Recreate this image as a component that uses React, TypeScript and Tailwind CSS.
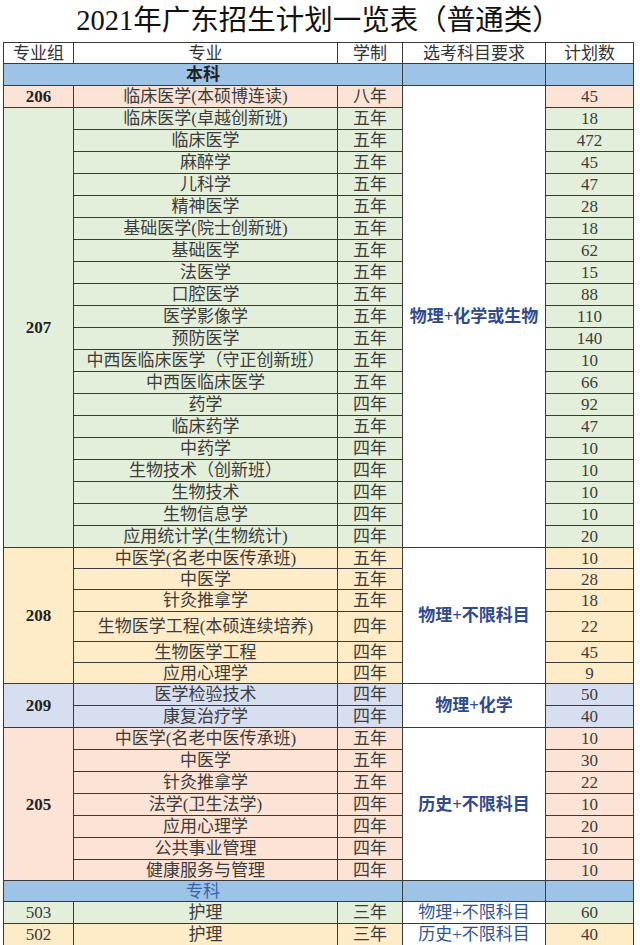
import React from 'react';

type Row = { name: string; years: string; n: string };

const g207: Row[] = [
  { name: '临床医学(卓越创新班)', years: '五年', n: '18' },
  { name: '临床医学', years: '五年', n: '472' },
  { name: '麻醉学', years: '五年', n: '45' },
  { name: '儿科学', years: '五年', n: '47' },
  { name: '精神医学', years: '五年', n: '28' },
  { name: '基础医学(院士创新班)', years: '五年', n: '18' },
  { name: '基础医学', years: '五年', n: '62' },
  { name: '法医学', years: '五年', n: '15' },
  { name: '口腔医学', years: '五年', n: '88' },
  { name: '医学影像学', years: '五年', n: '110' },
  { name: '预防医学', years: '五年', n: '140' },
  { name: '中西医临床医学（守正创新班）', years: '五年', n: '10' },
  { name: '中西医临床医学', years: '五年', n: '66' },
  { name: '药学', years: '四年', n: '92' },
  { name: '临床药学', years: '五年', n: '47' },
  { name: '中药学', years: '四年', n: '10' },
  { name: '生物技术（创新班）', years: '四年', n: '10' },
  { name: '生物技术', years: '四年', n: '10' },
  { name: '生物信息学', years: '四年', n: '10' },
  { name: '应用统计学(生物统计)', years: '四年', n: '20' },
];

const g208: Row[] = [
  { name: '中医学(名老中医传承班)', years: '五年', n: '10' },
  { name: '中医学', years: '五年', n: '28' },
  { name: '针灸推拿学', years: '五年', n: '18' },
  { name: '生物医学工程(本硕连续培养)', years: '四年', n: '22' },
  { name: '生物医学工程', years: '四年', n: '45' },
  { name: '应用心理学', years: '四年', n: '9' },
];

const g209: Row[] = [
  { name: '医学检验技术', years: '四年', n: '50' },
  { name: '康复治疗学', years: '四年', n: '40' },
];

const g205: Row[] = [
  { name: '中医学(名老中医传承班)', years: '五年', n: '10' },
  { name: '中医学', years: '五年', n: '30' },
  { name: '针灸推拿学', years: '五年', n: '22' },
  { name: '法学(卫生法学)', years: '四年', n: '10' },
  { name: '应用心理学', years: '四年', n: '20' },
  { name: '公共事业管理', years: '四年', n: '10' },
  { name: '健康服务与管理', years: '四年', n: '10' },
];

const C = 'flex items-center justify-center whitespace-nowrap pt-px';
const BODY = 'text-[17px] text-[#3c3c3c]';
const PICK = 'text-[17px] font-bold text-[#2f4b8e]';

function Group({
  code,
  rows,
  bg,
  spanCls,
  pick,
  pickSpan,
}: {
  code: string;
  rows: Row[];
  bg: string;
  spanCls: string;
  pick?: string;
  pickSpan?: string;
}) {
  return (
    <>
      {rows.map((r, i) => (
        <React.Fragment key={i}>
          {i === 0 && (
            <div className={`${C} ${bg} ${spanCls} text-[17px] font-bold text-[#222]`}>{code}</div>
          )}
          <div className={`${C} ${bg} ${BODY}`}>{r.name}</div>
          <div className={`${C} ${bg} ${BODY}`}>{r.years}</div>
          {i === 0 && pick !== undefined && (
            <div className={`${C} bg-white ${pickSpan ?? ''} ${PICK}`}>{pick}</div>
          )}
          <div className={`${C} ${bg} ${BODY}`}>{r.n}</div>
        </React.Fragment>
      ))}
    </>
  );
}

export default function App() {
  return (
    <div className="w-[640px] h-[945px] overflow-hidden bg-white font-['Liberation_Serif','Noto_Sans_CJK_SC',serif]">
      <div className="pl-[3px] w-[640px]">
        <div className="h-[42px] w-[631px] flex items-center justify-center text-[28.5px] text-[#111] leading-none">
          2021年广东招生计划一览表（普通类）
        </div>
        <div className="grid w-fit bg-[#3a3a3a] gap-px border border-[#3a3a3a] grid-cols-[69px_263px_64px_142px_87px] grid-rows-[20px_21px_21px_repeat(20,21px)_20px_20px_21px_29px_20px_20px_21px_21px_21px_21px_21px_21px_21px_21px_20px_20px_21px_21px]">
          {/* header */}
          {['专业组', '专业', '学制', '选考科目要求', '计划数'].map((h) => (
            <div key={h} className={`${C} bg-white text-[17px] text-[#333]`}>
              {h}
            </div>
          ))}
          {/* 本科 */}
          <div className={`${C} col-span-3 bg-[#9dc3e6] text-[17px] font-bold text-[#222]`}>本科</div>
          <div className="bg-[#9dc3e6]" />
          <div className="bg-[#9dc3e6]" />
          {/* 206 */}
          <div className={`${C} bg-[#fbe3d5] text-[17px] font-bold text-[#222]`}>206</div>
          <div className={`${C} bg-[#fbe3d5] ${BODY}`}>临床医学(本硕博连读)</div>
          <div className={`${C} bg-[#fbe3d5] ${BODY}`}>八年</div>
          <div className={`${C} bg-white row-span-21 ${PICK}`}>物理+化学或生物</div>
          <div className={`${C} bg-[#fbe3d5] ${BODY}`}>45</div>
          {/* 207 */}
          <Group code="207" rows={g207} bg="bg-[#e3efda]" spanCls="row-span-20" />
          {/* 208 */}
          <Group
            code="208"
            rows={g208}
            bg="bg-[#feebc8]"
            spanCls="row-span-6"
            pick="物理+不限科目"
            pickSpan="row-span-6"
          />
          {/* 209 */}
          <Group
            code="209"
            rows={g209}
            bg="bg-[#d7deef]"
            spanCls="row-span-2"
            pick="物理+化学"
            pickSpan="row-span-2"
          />
          {/* 205 */}
          <Group
            code="205"
            rows={g205}
            bg="bg-[#fbe3d5]"
            spanCls="row-span-7"
            pick="历史+不限科目"
            pickSpan="row-span-7"
          />
          {/* 专科 */}
          <div className={`${C} col-span-3 bg-[#9dc3e6] text-[17px] text-[#3564ad]`}>专科</div>
          <div className="bg-[#9dc3e6]" />
          <div className="bg-[#9dc3e6]" />
          {/* 503 */}
          <div className={`${C} bg-[#e3efda] ${BODY}`}>503</div>
          <div className={`${C} bg-[#e3efda] ${BODY}`}>护理</div>
          <div className={`${C} bg-[#e3efda] ${BODY}`}>三年</div>
          <div className={`${C} bg-white text-[17px] text-[#2f5597]`}>物理+不限科目</div>
          <div className={`${C} bg-[#e3efda] ${BODY}`}>60</div>
          {/* 502 */}
          <div className={`${C} bg-[#feebc8] ${BODY}`}>502</div>
          <div className={`${C} bg-[#feebc8] ${BODY}`}>护理</div>
          <div className={`${C} bg-[#feebc8] ${BODY}`}>三年</div>
          <div className={`${C} bg-white text-[17px] text-[#2f5597]`}>历史+不限科目</div>
          <div className={`${C} bg-[#feebc8] ${BODY}`}>40</div>
        </div>
      </div>
    </div>
  );
}
